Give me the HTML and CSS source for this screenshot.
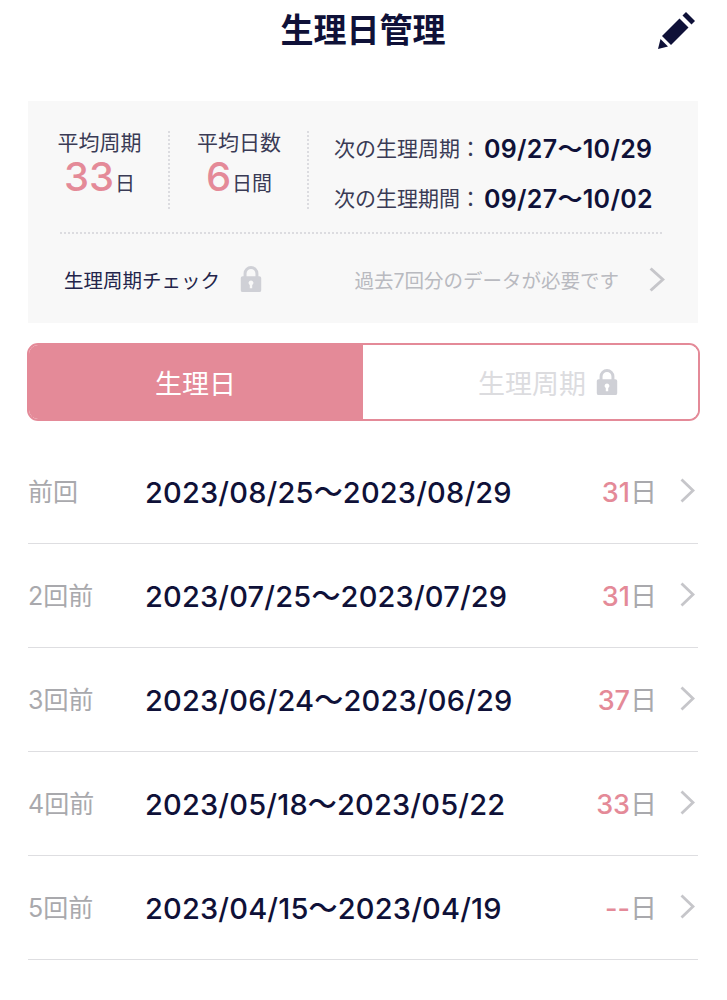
FILE: index.html
```html
<!DOCTYPE html>
<html lang="ja">
<head>
<meta charset="utf-8">
<title>生理日管理</title>
<link rel="stylesheet" href="styles.css">
</head>
<body>
<svg class="defs" width="0" height="0" aria-hidden="true">
  <symbol id="lock" viewBox="0 0 22 28">
    <path fill-rule="evenodd" d="M3 11V8a8 8 0 0 1 16 0v3h1a2 2 0 0 1 2 2v13a2 2 0 0 1-2 2H2a2 2 0 0 1-2-2V13a2 2 0 0 1 2-2h1zm3.200 0h9.600V8a4.800 4.800 0 0 0-9.600 0v3zM11 15.500a2.600 2.600 0 0 0-1.300 4.850V24h2.600v-3.650A2.600 2.600 0 0 0 11 15.500z"/>
  </symbol>
  <symbol id="chev" viewBox="0 0 15 25" preserveAspectRatio="none">
    <path d="M1.500 1.500l11.500 11-11.500 11" fill="none" stroke="currentColor" stroke-width="2.800"/>
  </symbol>
</svg>
<main class="page">
  <header class="top">
    <h1 class="title">生理日管理</h1>
    <svg class="pen" viewBox="0 0 38 38" aria-hidden="true">
      <path d="M28 1l9 9-3.500 3.500-9-9z"/>
      <path d="M21.500 7.500l9 9L13 34 4 25z"/>
      <path d="M2.500 28l7.500 7.500L0 38z"/>
    </svg>
  </header>

  <section class="card">
    <div class="stats">
      <div class="stat stat-a">
        <div class="stat-label">平均周期</div>
        <div class="stat-value"><span class="num">33</span><span class="unit">日</span></div>
      </div>
      <div class="stat stat-b">
        <div class="stat-label">平均日数</div>
        <div class="stat-value"><span class="num">6</span><span class="unit">日間</span></div>
      </div>
      <div class="next">
        <div class="next-row"><span class="next-label">次の生理周期：</span><span class="next-date">09/27〜10/29</span></div>
        <div class="next-row"><span class="next-label">次の生理期間：</span><span class="next-date">09/27〜10/02</span></div>
      </div>
    </div>
    <div class="check">
      <span class="check-label">生理周期チェック</span>
      <svg class="lock lock-check" aria-hidden="true"><use href="#lock"/></svg>
      <span class="check-note">過去7回分のデータが必要です</span>
      <svg class="chev chev-check" aria-hidden="true"><use href="#chev"/></svg>
    </div>
  </section>

  <div class="tabs">
    <div class="tab tab-on">生理日</div>
    <div class="tab tab-off">生理周期<svg class="lock lock-tab" aria-hidden="true"><use href="#lock"/></svg></div>
  </div>

  <ul class="list">
    <li class="row"><span class="when">前回</span><span class="range">2023/08/25〜2023/08/29</span><span class="days"><b>31</b>日</span><svg class="chev" aria-hidden="true"><use href="#chev"/></svg></li>
    <li class="row"><span class="when">2回前</span><span class="range">2023/07/25〜2023/07/29</span><span class="days"><b>31</b>日</span><svg class="chev" aria-hidden="true"><use href="#chev"/></svg></li>
    <li class="row"><span class="when">3回前</span><span class="range">2023/06/24〜2023/06/29</span><span class="days"><b>37</b>日</span><svg class="chev" aria-hidden="true"><use href="#chev"/></svg></li>
    <li class="row"><span class="when">4回前</span><span class="range">2023/05/18〜2023/05/22</span><span class="days"><b>33</b>日</span><svg class="chev" aria-hidden="true"><use href="#chev"/></svg></li>
    <li class="row"><span class="when">5回前</span><span class="range">2023/04/15〜2023/04/19</span><span class="days"><b>--</b>日</span><svg class="chev" aria-hidden="true"><use href="#chev"/></svg></li>
  </ul>
</main>
</body>
</html>
```
FILE: styles.css
```css
* { box-sizing: border-box; margin: 0; padding: 0; }
html, body { background: #fff; }
body {
  font-family: Inter, "Noto Sans CJK JP", sans-serif;
  color: #0f1138;
  overflow: hidden;
}
.defs { position: absolute; }
.page { width: 727px; height: 1000px; padding: 0 29px 0 28px; }

.top { position: relative; height: 101px; display: flex; justify-content: center; padding-top: 7px; }
.title { font-size: 33px; line-height: 46px; font-weight: 600; height: 46px; }
.pen { position: absolute; right: 2px; top: 11px; width: 38px; height: 38px; fill: #0f1138; }

.card { height: 222px; background: #f8f8f8; padding: 30px 36px 0 32px; }
.stats { display: flex; height: 78px; }
.stat { display: flex; flex-direction: column; align-items: center; text-align: center; border-right: 2px dotted #dcdce0; }
.stat-a { width: 138px; margin-left: -28px; padding-right: 1px; }
.stat-b { width: 139px; padding-right: 1px; padding-left: 2px; }
.stat-label { font-size: 21px; line-height: 24px; color: #3a3b55; white-space: nowrap; }
.stat-value { display: flex; align-items: baseline; line-height: 44px; height: 44px; white-space: nowrap; }
.num { font-size: 40px; color: #e48a98; font-weight: 500; }
.unit { font-size: 20px; color: #3a3b55; margin-left: 1px; }
.next { padding-left: 25px; display: flex; flex-direction: column; gap: 18px; }
.next-row { display: flex; align-items: center; height: 32px; white-space: nowrap; }
.next-label { font-size: 21px; color: #3a3b55; width: 150px; }
.next-date { font-size: 25px; font-weight: 600; letter-spacing: 0.3px; }

.check { display: flex; align-items: center; margin-top: 23px; padding-top: 24px; height: 70px; position: relative; }
.check::before { content: ""; position: absolute; top: 0; left: 0; right: 0; border-top: 2px dotted #dcdce0; }
.check-label { font-size: 19.500px; color: #23244a; margin-left: 4px; white-space: nowrap; }
.lock { fill: #cfd0d6; display: block; }
.lock-check { width: 22px; height: 26px; margin-left: 20px; }
.check-note { font-size: 19.500px; color: #b9bac0; margin-left: auto; white-space: nowrap; }
.chev { width: 15px; height: 25px; color: #c6c6ca; flex: none; }
.chev-check { width: 16px; height: 25px; margin-left: 30px; margin-right: -3px; }

.tabs { display: flex; height: 78px; margin: 20px -2px 0 -1px; border: 2px solid #e48a98; border-radius: 11px; overflow: hidden; }
.tab { flex: 1 1 50%; display: flex; align-items: center; justify-content: center; font-size: 27px; white-space: nowrap; }
.tab-on { background: #e48a98; color: #fff; margin-right: -1px; padding-right: 2px; }
.tab-off { color: #dcdcdf; background: #fff; padding-left: 35px; }
.lock-tab { width: 22px; height: 26px; margin-left: 10px; }

.list { list-style: none; margin-top: 19px; }
.row { display: flex; align-items: center; height: 104px; border-bottom: 1px solid #dedee1; padding-bottom: 3px; }
.when { width: 117px; font-size: 25px; color: #a9a9ad; white-space: nowrap; }
.range { font-size: 29px; font-weight: 500; letter-spacing: 0.18px; white-space: nowrap; }
.days { margin-left: auto; font-size: 27px; color: #a9a9ad; white-space: nowrap; }
.days b { color: #e48a98; font-weight: 500; }
.row .chev { margin-left: 23px; margin-right: 3px; margin-top: 1px; }
```
